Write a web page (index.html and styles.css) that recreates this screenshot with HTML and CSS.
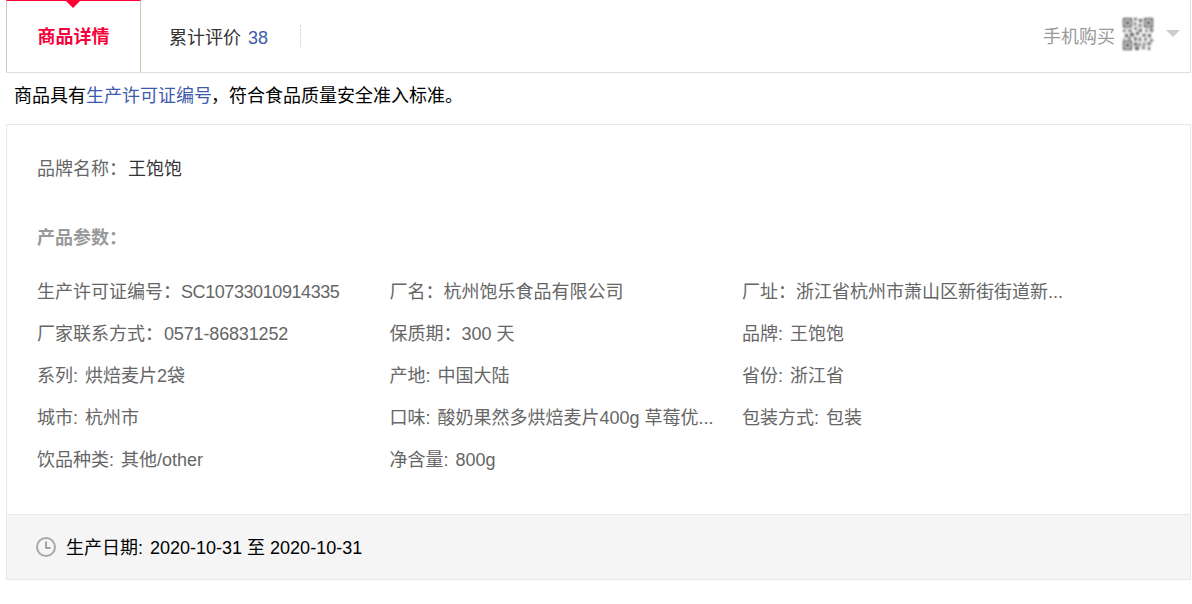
FILE: index.html
```
<!DOCTYPE html>
<html lang="zh-CN">
<head>
<meta charset="utf-8">
<title>商品详情</title>
<link rel="stylesheet" href="styles.css">
</head>
<body>
<div class="page">
  <div class="tabbar">
    <div class="tab active"><span class="tab-label">商品详情</span></div>
    <div class="tab plain"><span>累计评价<span class="count">38</span></span></div>
    <div class="divider"></div>
    <div class="buy">
      <span class="buy-label">手机购买</span>
      <svg class="qr" width="30" height="32" viewBox="0 0 30 30" preserveAspectRatio="none">
        <path fill="#444" d="M0 0h9v9H0zM21 0h9v9h-9zM0 21h9v9H0z"/>
        <path fill="#fff" d="M1.500 1.500h6v6h-6zM22.500 1.500h6v6h-6zM1.500 22.500h6v6h-6z"/>
        <path fill="#333" d="M3 3h3v3H3zM24 3h3v3h-3zM3 24h3v3H3z"/>
        <path fill="#555" d="M11 0h3v2h-3zM16 1h3v3h-3zM11 4h2v3h-2zM15 6h4v2h-4zM11 9h3v2h-3zM0 11h3v2H0zM5 11h4v2H5zM16 10h3v3h-3zM22 11h3v2h-3zM27 10h3v3h-3zM2 15h3v3H2zM7 14h4v3H7zM13 13h3v3h-3zM19 15h4v2h-4zM25 15h3v3h-3zM0 19h2v1H0zM5 18h3v2H5zM11 18h3v3h-3zM16 18h2v4h-2zM21 19h3v2h-3zM27 20h3v2h-3zM11 23h3v3h-3zM15 24h3v2h-3zM20 23h2v3h-2zM24 23h4v2h-4zM12 27h4v3h-4zM19 27h3v2h-3zM25 27h2v3h-2z"/>
      </svg>
      <i class="caret"></i>
    </div>
  </div>
  <p class="notice">商品具有<span class="link">生产许可证编号</span>，符合食品质量安全准入标准。</p>
  <div class="card">
    <div class="body">
      <div class="brand">品牌名称：<span class="dark">王饱饱</span></div>
      <div class="heading">产品参数：</div>
      <ul class="params">
        <li>生产许可证编号：<span class="code">SC10733010914335</span></li>
        <li>厂名：杭州饱乐食品有限公司</li>
        <li>厂址：浙江省杭州市萧山区新街街道新...</li>
        <li>厂家联系方式：<span class="phone">0571-86831252</span></li>
        <li>保质期：300 天</li>
        <li><span class="key">品牌:</span> 王饱饱</li>
        <li><span class="key">系列:</span> 烘焙麦片2袋</li>
        <li><span class="key">产地:</span> 中国大陆</li>
        <li><span class="key">省份:</span> 浙江省</li>
        <li><span class="key">城市:</span> 杭州市</li>
        <li><span class="key">口味:</span> 酸奶果然多烘焙麦片400g 草莓优...</li>
        <li><span class="key">包装方式:</span> 包装</li>
        <li><span class="key">饮品种类:</span> 其他/other</li>
        <li><span class="key">净含量:</span> 800g</li>
      </ul>
    </div>
    <div class="footer">
      <svg class="clock" width="20" height="20" viewBox="0 0 20 20" fill="none">
        <circle cx="10" cy="10" r="9" stroke="#a8a8a8" stroke-width="2"/>
        <path d="M10 4.500V11H14.500" stroke="#888" stroke-width="1.500"/>
      </svg>
      <span class="date"><span class="key">生产日期:</span> 2020-10-31 至 2020-10-31</span>
    </div>
  </div>
</div>
</body>
</html>
```
FILE: styles.css
```
* { box-sizing: border-box; }
html, body { margin: 0; padding: 0; background: #fff; }
body { font-family: "Liberation Sans", "Noto Sans CJK SC", sans-serif; font-size: 18px; color: #000; }
.page { width: 1192px; height: 604px; padding-left: 6px; padding-right: 1px; }
.tabbar { display: flex; align-items: center; height: 73px; border-bottom: 1px solid #dedede; border-right: 1px solid #dedede; }
.tab { height: 72px; display: flex; align-items: center; }
.active { position: relative; width: 135px; justify-content: center; color: #f5003a; font-weight: 700; border-left: 1px solid #d3c4b4; border-right: 1px solid #d3c4b4; border-top: 1px solid #ff0036; }
.active::after { content: ""; position: absolute; left: 59px; top: 0; border: 7px solid transparent; border-bottom: 0; border-top-color: #ff0036; }
.tab-label { margin-top: -4px; }
.plain { color: #333; padding-left: 28px; }
.count { color: #3d5bab; margin-left: 7px; }
.divider { height: 22px; margin-left: 32px; border-left: 1px dotted #ccc; }
.buy { margin-left: auto; display: flex; align-items: center; color: #999; padding-right: 10px; }
.buy-label { margin-left: -1px; margin-top: -2px; }
.qr { margin-left: 8px; margin-top: -4px; filter: blur(0.8px); }
.caret { margin-left: 13px; margin-top: -6px; border: 7px solid transparent; border-bottom: 0; border-top-color: #ccc; }
.notice { margin: 0; height: 51px; padding: 11px 0 0 8px; line-height: 24px; }
.link { color: #3d5bab; margin-right: -1px; }
.card { border: 1px solid #e8e8e8; height: 456px; display: flex; flex-direction: column; }
.body { flex: 1; padding: 31px 30px 0; color: #666; }
.brand { line-height: 26px; }
.dark { color: #333; margin-left: 1px; }
.heading { margin-top: 43px; line-height: 26px; font-weight: 700; color: #999; }
.params { list-style: none; margin: 20px 0 0; padding: 0; display: grid; grid-template-columns: repeat(3, 352.500px); grid-auto-rows: 42px; }
.params li { line-height: 42px; white-space: nowrap; }
.key { margin-right: 2px; }
.code { letter-spacing: -0.42px; }
.phone { margin-left: 1px; letter-spacing: -0.15px; }
.footer { height: 65px; display: flex; align-items: center; gap: 10px; padding-left: 29px; background: #f5f5f5; border-top: 1px solid #e8e8e8; }
.clock { filter: blur(0.3px); }
.date { margin-top: -2px; }
```
